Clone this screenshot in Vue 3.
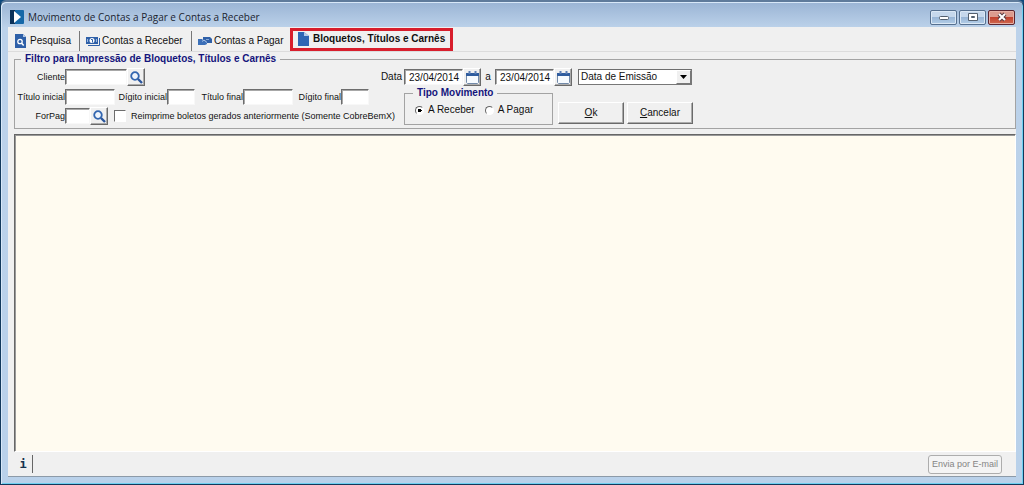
<script setup>
import { ref } from 'vue'

const client = ref('')
const titleStart = ref('')
const digitStart = ref('')
const titleEnd = ref('')
const digitEnd = ref('')
const payForm = ref('')
const reprint = ref(false)
const dateFrom = ref('23/04/2014')
const dateTo = ref('23/04/2014')
const dateKind = ref('Data de Emissão')
const movement = ref('receber')
const output = ref('')
</script>

<template>
  <div class="window">
    <header class="titlebar">
      <svg class="app-icon" viewBox="0 0 14 14" aria-hidden="true">
        <rect width="14" height="14" rx="1" fill="#1668a8" />
        <path d="M0 0h5v14H0z" fill="#0b3158" />
        <path d="M4 1l7 6-7 6z" fill="#fff" />
      </svg>
      <h1>Movimento de Contas a Pagar e Contas a Receber</h1>
      <div class="controls">
        <button type="button" class="ctl" aria-label="Minimizar">
          <svg width="12" height="10" viewBox="0 0 12 10"><rect x="1.500" y="4.500" width="9" height="3" rx="1" fill="#fff" stroke="#54606e" /></svg>
        </button>
        <button type="button" class="ctl" aria-label="Maximizar">
          <svg width="12" height="10" viewBox="0 0 12 10"><path d="M1.500 1.500h9v7h-9zM4.500 4.500h3v1h-3z" fill="#fff" fill-rule="evenodd" stroke="#54606e" /></svg>
        </button>
        <button type="button" class="ctl close" aria-label="Fechar">
          <svg width="12" height="10" viewBox="0 0 12 10"><path d="M3 2l6 6M9 2l-6 6" stroke="#5a3a40" stroke-width="4" /><path d="M3 2l6 6M9 2l-6 6" stroke="#fff" stroke-width="2" /></svg>
        </button>
      </div>
    </header>

    <main class="client">
      <nav class="tabs">
        <button type="button" class="tab search">
          <svg width="11" height="14" viewBox="0 0 11 14" aria-hidden="true">
            <path d="M0 0h8l3 3v11H0z" fill="#2f60a8" /><path d="M8 0l3 3H8z" fill="#b9cde8" />
            <circle cx="5" cy="7.500" r="2.200" fill="none" stroke="#fff" stroke-width="1.300" /><path d="M6.700 9.200l2 2.300" stroke="#fff" stroke-width="1.500" />
          </svg>
          Pesquisa
        </button>
        <button type="button" class="tab receive">
          <svg width="14" height="10" viewBox="0 0 14 10" aria-hidden="true">
            <path d="M0 1h12v7H0z" fill="#2f60a8" /><path d="M13.500 2v7.500H2" fill="none" stroke="#2f60a8" />
            <path d="M1.500 3v3M10.500 3v3" stroke="#9db9e0" />
            <circle cx="6" cy="4.500" r="2.500" fill="#fff" /><path d="M5 3.500h1.500v3" fill="none" stroke="#2f60a8" />
          </svg>
          Contas a Receber
        </button>
        <button type="button" class="tab pay">
          <svg width="14" height="10" viewBox="0 0 14 10" aria-hidden="true">
            <path d="M5 1h7l2 2v4H9L7 4.500 5 5z" fill="#2f60a8" /><path d="M0 3h4l2 2h3v3l-2 1H0z" fill="#3c70b8" />
            <path d="M4 5.500l2-1.500 3 2.500" fill="none" stroke="#a9c2e6" /><path d="M8 3.500h3" stroke="#86a8d8" />
          </svg>
          Contas a Pagar
        </button>
        <button type="button" class="tab active">
          <svg width="11" height="14" viewBox="0 0 11 14" aria-hidden="true">
            <path d="M0 0h6l5 4v10H0z" fill="#2f66b4" /><path d="M6 0l5 4H6z" fill="#b5cbea" />
          </svg>
          Bloquetos, Títulos e Carnês
        </button>
      </nav>

      <form class="content" @submit.prevent>
        <fieldset class="filter">
          <legend>Filtro para Impressão de Bloquetos, Títulos e Carnês</legend>

          <div class="row top">
            <label class="l-first small" for="client">Cliente</label>
            <input id="client" v-model="client" class="box w-client" type="text">
            <button type="button" class="tool" aria-label="Buscar cliente">
              <svg width="13" height="13" viewBox="0 0 13 13"><circle cx="5" cy="5" r="3.800" fill="#eef4fc" stroke="#3366b0" stroke-width="1.800" /><path d="M8 8l4 4" stroke="#2a569c" stroke-width="2.400" /></svg>
            </button>
            <div class="row dates">
              <label class="l-date" for="from">Data</label>
              <input id="from" v-model="dateFrom" class="box w-date" type="text">
              <button type="button" class="tool" aria-label="Escolher data inicial">
                <svg width="13" height="13" viewBox="0 0 13 13"><path d="M.500 3.500h12v8l-1 1h-10l-1-1z" fill="#f6fafe" stroke="#7189a8" /><path d="M0 2h13v3H0z" fill="#2f5c9e" /><path d="M3.500 0v3M9.500 0v3" stroke="#5c7fb4" stroke-width="2" /></svg>
              </button>
              <label class="l-to" for="to">a</label>
              <input id="to" v-model="dateTo" class="box w-date" type="text">
              <button type="button" class="tool" aria-label="Escolher data final">
                <svg width="13" height="13" viewBox="0 0 13 13"><path d="M.500 3.500h12v8l-1 1h-10l-1-1z" fill="#f6fafe" stroke="#7189a8" /><path d="M0 2h13v3H0z" fill="#2f5c9e" /><path d="M3.500 0v3M9.500 0v3" stroke="#5c7fb4" stroke-width="2" /></svg>
              </button>
              <div class="combo">
                <select v-model="dateKind" aria-label="Tipo de data">
                  <option>Data de Emissão</option>
                  <option>Data de Vencimento</option>
                </select>
                <span class="arrow" aria-hidden="true"><svg width="7" height="4" viewBox="0 0 7 4"><path d="M0 0h7L3.500 4z" /></svg></span>
              </div>
            </div>
          </div>

          <div class="lower">
            <div class="left small">
              <div class="row second">
                <label class="l-first" for="t1">Título inicial</label>
                <input id="t1" v-model="titleStart" class="box w-title" type="text">
                <label class="l-mid" for="d1">Dígito inicial</label>
                <input id="d1" v-model="digitStart" class="box w-digit" type="text">
                <label class="l-end" for="t2">Título final</label>
                <input id="t2" v-model="titleEnd" class="box w-title" type="text">
                <label class="l-end" for="d2">Dígito final</label>
                <input id="d2" v-model="digitEnd" class="box w-digit" type="text">
              </div>
              <div class="row">
                <label class="l-first" for="fp">ForPag</label>
                <input id="fp" v-model="payForm" class="box w-pay" type="text">
                <button type="button" class="tool" aria-label="Buscar forma de pagamento">
                  <svg width="13" height="13" viewBox="0 0 13 13"><circle cx="5" cy="5" r="3.800" fill="#eef4fc" stroke="#3366b0" stroke-width="1.800" /><path d="M8 8l4 4" stroke="#2a569c" stroke-width="2.400" /></svg>
                </button>
                <label class="check"><input v-model="reprint" type="checkbox">Reimprime boletos gerados anteriormente (Somente CobreBemX)</label>
              </div>
            </div>

            <fieldset class="movement">
              <legend>Tipo Movimento</legend>
              <label><input v-model="movement" type="radio" name="movement" value="receber">A Receber</label>
              <label><input v-model="movement" type="radio" name="movement" value="pagar">A Pagar</label>
            </fieldset>

            <div class="actions">
              <button type="submit" class="push"><span><u>O</u>k</span></button>
              <button type="button" class="push"><span><u>C</u>ancelar</span></button>
            </div>
          </div>
        </fieldset>

        <textarea v-model="output" class="memo" aria-label="Resultado"></textarea>

        <footer class="status">
          <button type="button" class="info" aria-label="Informações">i</button>
          <button type="button" class="mail" disabled>Envia por E-mail</button>
        </footer>
      </form>
    </main>
  </div>
</template>

<style>
body {
  margin: 0;
  background: #0d4a7e;
}
</style>

<style scoped>
* {
  box-sizing: border-box;
}

button, input, select, textarea {
  font: inherit;
  color: inherit;
  margin: 0;
  padding: 0;
  border-radius: 0;
}

svg {
  display: block;
  flex: none;
}

.window {
  display: flex;
  flex-direction: column;
  min-height: 100vh;
  padding: 0 7px 7px;
  border: 1px solid #12395c;
  border-top: 2px solid #5f7b9b;
  border-radius: 6px 6px 0 0;
  background: linear-gradient(#9ab4d4, #bcd2ea 26px, #b9d1ea);
  box-shadow: inset 1px 1px 0 #d8e8f8, inset -1px -1px 0 #6fd0f0;
  font: 10px/14px "Liberation Sans", Arial, sans-serif;
  color: #111;
}

.small {
  font-size: 9px;
}

.titlebar {
  display: flex;
  align-items: center;
  height: 25px;
  padding: 4px 0 0 2px;
}

.app-icon {
  width: 14px;
  height: 14px;
}

h1 {
  flex: 1;
  margin: 0 0 0 4px;
  font: 10px/16px "Open Sans", "Noto Sans", sans-serif;
  color: #1b2430;
}

.controls {
  display: flex;
  gap: 2px;
  padding: 1px 1px 0 0;
}

.ctl {
  display: flex;
  align-items: center;
  justify-content: center;
  width: 27px;
  height: 15px;
  border: 1px solid #56708f;
  border-radius: 2px;
  background: linear-gradient(#c6d8ec 45%, #99b6d6 50%, #b4cee8);
  box-shadow: inset 0 0 0 1px #dbe8f5;
}

.close {
  border-color: #5c2530;
  background: linear-gradient(#dc9b8e 45%, #c2412e 50%, #cf6a50);
  box-shadow: inset 0 0 0 1px #e6b0a5;
}

.client {
  flex: 1;
  display: flex;
  flex-direction: column;
  border-bottom: 1px solid #8c9aa8;
  background: #f0f0f0;
}

.tabs {
  display: flex;
  height: 25px;
  padding: 1px 0 0 6px;
  border-bottom: 1px solid #dcdcdc;
}

.tab {
  display: flex;
  align-items: center;
  height: 23px;
  border: 0;
  background: none;
  white-space: nowrap;
}

.search, .receive, .pay {
  margin-top: 3px;
}

.search, .receive {
  height: 20px;
  border-right: 1px solid #777;
}

.pay {
  height: 20px;
}

.search {
  width: 66px;
  gap: 4px;
  padding-left: 1px;
}

.receive {
  width: 112px;
  gap: 2px;
  padding-left: 6px;
}

.pay {
  width: 98px;
  gap: 2px;
  padding-left: 6px;
}

.active {
  gap: 4px;
  padding: 0 5px 2px 5px;
  border: 3px solid #d81e2c;
  font-weight: bold;
}

.content {
  flex: 1;
  display: flex;
  flex-direction: column;
  padding: 0 0 0 6px;
}

fieldset {
  margin: 0;
  min-width: 0;
  border: 1px solid #a3a3a3;
}

legend {
  padding: 0 4px;
  font-weight: bold;
  color: #14147c;
}

.filter {
  padding: 2px 0 3px;
}

.filter > legend {
  margin-left: 6px;
}

.row {
  display: flex;
  align-items: center;
  height: 18px;
  white-space: nowrap;
}

.second {
  height: 16px;
}

.row label {
  flex: none;
  text-align: right;
}

.l-first {
  width: 50px;
}

.l-mid {
  width: 52px;
}

.l-end {
  width: 48px;
}

.l-date {
  width: 22px;
  margin-right: 2px;
}

.dates .l-to {
  width: 14px;
  text-align: center;
}

.dates {
  margin-left: 235px;
}

.box {
  flex: none;
  height: 16px;
  border: 1px solid;
  border-color: #6d6d6d #f8f8f8 #f8f8f8 #6d6d6d;
  box-shadow: inset 1px 1px 0 #a8a8a8;
  background: #fff;
  outline: 0;
}

.w-client {
  width: 62px;
}

.w-title {
  width: 50px;
}

.w-digit {
  width: 28px;
}

.w-pay {
  width: 25px;
}

.w-date {
  width: 59px;
  padding-left: 4px;
}

.tool, .push {
  display: flex;
  align-items: center;
  justify-content: center;
  border: 1px solid;
  border-color: #fff #6a6a6a #6a6a6a #fff;
  box-shadow: inset -1px -1px 0 #ababab;
  background: #f0f0f0;
}

.tool {
  flex: none;
  width: 18px;
  height: 18px;
}

.combo {
  display: flex;
  position: relative;
  width: 114px;
  height: 16px;
  margin-left: 6px;
  border: 1px solid;
  border-color: #6d6d6d #777 #777 #6d6d6d;
  background: #fff;
}

.combo select {
  appearance: none;
  width: 100%;
  padding-left: 2px;
  border: 0;
  background: none;
  outline: 0;
}

.arrow {
  position: absolute;
  top: 0;
  right: 0;
  bottom: 0;
  display: flex;
  align-items: center;
  justify-content: center;
  width: 15px;
  border: 1px solid;
  border-color: #fff #777 #777 #fff;
  background: #f0f0f0;
  pointer-events: none;
}

.lower {
  display: flex;
  align-items: flex-end;
}

.left {
  display: flex;
  flex-direction: column;
  gap: 2px;
  width: 389px;
}

.row .check {
  display: flex;
  align-items: center;
  gap: 5px;
  margin-left: 6px;
}

.check input {
  appearance: none;
  width: 12px;
  height: 12px;
  border: 1px solid;
  border-color: #6d6d6d #fff #fff #6d6d6d;
  background: #fff;
}

.check input:checked {
  background: #3366b0;
}

.movement {
  display: flex;
  gap: 10px;
  width: 149px;
  height: 39px;
  padding: 3px 0 0 10px;
}

.movement legend {
  margin-left: -2px;
}

.movement label {
  display: flex;
  align-items: center;
  gap: 4px;
  height: 14px;
  white-space: nowrap;
}

.movement input {
  appearance: none;
  flex: none;
  width: 9px;
  height: 9px;
  border: 1px solid;
  border-color: #666 #fff #fff #666;
  border-radius: 50%;
  background: #fff;
}

.movement input:checked {
  background: radial-gradient(circle, #000 2px, #fff 2px);
}

.actions {
  display: flex;
  gap: 3px;
  margin-left: 5px;
  padding-bottom: 1px;
}

.push {
  width: 66px;
  height: 22px;
}

.memo {
  flex: 1;
  width: 100%;
  margin-top: 5px;
  border: 1px solid;
  border-color: #666 #fff #fff #666;
  box-shadow: inset 1px 1px 0 #999;
  background: #fffbf0;
  outline: 0;
  resize: none;
}

.status {
  display: flex;
  align-items: center;
  justify-content: space-between;
  height: 24px;
  padding-right: 14px;
}

.info {
  width: 19px;
  height: 18px;
  border: 0;
  border-right: 1px solid #666;
  background: none;
  font: bold 12px/16px "DejaVu Sans Mono", monospace;
  color: #17324e;
}

.mail {
  width: 74px;
  height: 19px;
  border: 1px solid #adadad;
  border-radius: 3px;
  background: #f4f4f4;
  font-size: 9px;
  color: #858585;
  white-space: nowrap;
}
</style>
